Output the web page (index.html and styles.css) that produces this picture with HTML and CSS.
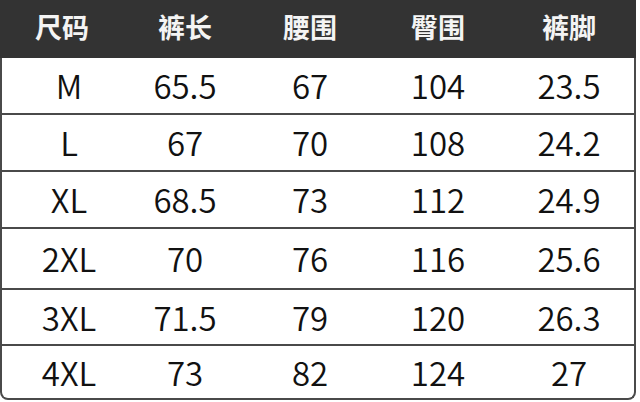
FILE: index.html
```html
<!DOCTYPE html>
<html lang="zh">
<head>
<meta charset="utf-8">
<link rel="stylesheet" href="styles.css">
</head>
<body>
<div class="chart">
  <div class="row head">
    <div>尺码</div><div>裤长</div><div>腰围</div><div>臀围</div><div>裤脚</div>
  </div>
  <div class="row"><div class="sz">M</div><div>65.5</div><div>67</div><div>104</div><div>23.5</div></div>
  <div class="row"><div class="sz">L</div><div>67</div><div>70</div><div>108</div><div>24.2</div></div>
  <div class="row"><div class="sz">XL</div><div>68.5</div><div>73</div><div>112</div><div>24.9</div></div>
  <div class="row tall"><div class="sz">2XL</div><div>70</div><div>76</div><div>116</div><div>25.6</div></div>
  <div class="row short"><div class="sz">3XL</div><div>71.5</div><div>79</div><div>120</div><div>26.3</div></div>
  <div class="row last"><div class="sz">4XL</div><div>73</div><div>82</div><div>124</div><div>27</div></div>
</div>
</body>
</html>
```
FILE: styles.css
```css
html, body {
  margin: 0;
  padding: 0;
  background: #ffffff;
}
body {
  width: 640px;
  height: 402px;
  overflow: hidden;
  font-family: "Noto Sans CJK SC", "Noto Sans", sans-serif;
}
.chart {
  width: 636px;
  display: flex;
  flex-direction: column;
}
.row {
  display: grid;
  grid-template-columns: 120px 126px 124px 132px 130px;
  height: 57px;
  box-sizing: border-box;
  border-left: 2px solid #4a4a4a;
  border-right: 2px solid #4a4a4a;
  border-bottom: 2px solid #4a4a4a;
  align-items: center;
  text-align: center;
  font-size: 33px;
  font-weight: 350;
  color: #111;
  width: 636px;
}
.row > div {
  line-height: 1;
}
.row.head {
  height: 58px;
  padding: 0 2px 6px 2px;
  background: #333333;
  color: #f4f4f4;
  font-size: 27px;
  font-weight: 700;
  border: none;
}
.row .sz {
  padding-left: 14px;
}
.row.tall {
  height: 61px;
}
.row.short {
  height: 56px;
}
.row.last {
  border-bottom-right-radius: 8px;
  border-bottom-left-radius: 8px;
  height: 54px;
}
```
